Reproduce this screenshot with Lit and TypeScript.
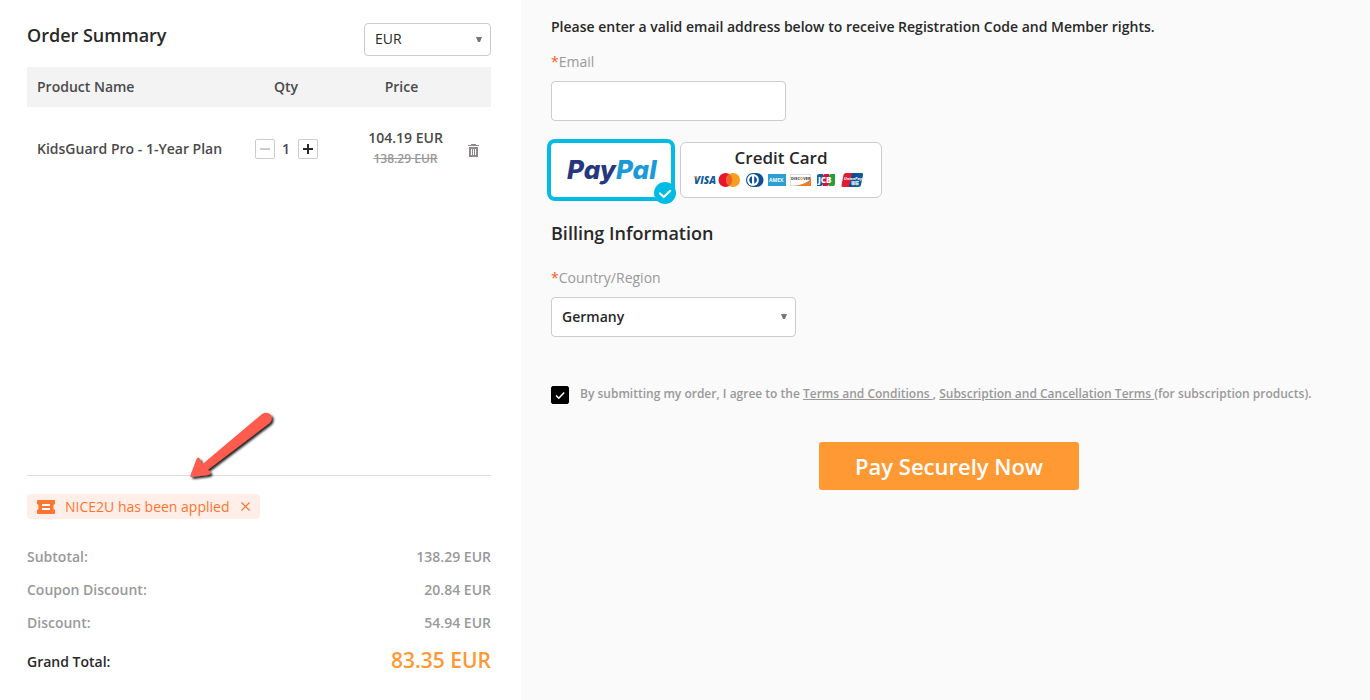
import { LitElement, html, css } from "lit";
import { customElement, state } from "lit/decorators.js";

@customElement("payment-methods")
class PaymentMethods extends LitElement {
  static styles = css`
    :host { display: block; }
    .methods { display: flex; align-items: center; gap: 5px; margin-left: -4px; }
    button { box-sizing: border-box; padding: 0; background: #fff; cursor: pointer; font-family: "Open Sans", sans-serif; }
    .paypal { position: relative; width: 128px; height: 62px; border: 4px solid #00bce4; border-radius: 8px; }
    .paypal svg { display: block; }
    .paypal .tick { position: absolute; right: -5px; bottom: -7px; }
    .card { width: 202px; height: 56px; border: 1px solid #ccc; border-radius: 6px; display: flex; flex-direction: column; align-items: center; }
    .card-title { font-size: 17px; line-height: 24px; font-weight: 600; color: #282828; margin-top: 3px; }
    .logos { display: block; margin-top: 2px; }
    .pp { font: italic 800 26px Inter, sans-serif; font-feature-settings: "cv11"; }
    .visa { font: italic 800 10px "Open Sans", sans-serif; }
    .tiny { font: 700 5px "Open Sans", sans-serif; }
    .jcb { font: 800 8px "Open Sans", sans-serif; }
  `;

  render() {
    return html`<div class="methods">
      <button class="paypal" type="button" aria-label="PayPal" aria-pressed="true">
        <svg width="120" height="54" viewBox="0 0 120 54">
          <text class="pp" x="16" y="36"><tspan fill="#26377f">Pay</tspan><tspan fill="#1a9ad8">Pal</tspan></text>
        </svg>
        <svg class="tick" width="22" height="22" viewBox="0 0 22 22">
          <circle cx="11" cy="11" r="11" fill="#00bce4" />
          <path d="M6 11.5 9.8 15 16.2 8.8" fill="none" stroke="#fff" stroke-width="2.2" stroke-linecap="round" stroke-linejoin="round" />
        </svg>
      </button>
      <button class="card" type="button" aria-pressed="false">
        <span class="card-title">Credit Card</span>
        <svg class="logos" width="174" height="16" viewBox="0 0 174 16" role="img" aria-label="Accepted cards">
          <text class="visa" x="0" y="12" fill="#125b9f">VISA</text>
          <path d="M0 4h2.600l1.400 3.500Q2.500 5 0 4.500Z" fill="#f2a022" />
          <circle cx="31.500" cy="8" r="7" fill="#e8152f" />
          <circle cx="39" cy="8" r="7" fill="#f79e1f" />
          <path d="M35.2 2.2a7 7 0 0 1 0 11.600 7 7 0 0 1 0-11.600Z" fill="#f4602a" />
          <path d="M59 1h3.500a7 7 0 0 1 0 14H59A7 7 0 0 1 59 1Z" fill="#0c5093" />
          <circle cx="59" cy="8" r="5.900" fill="#fff" />
          <path d="M58 4.200v7.600a4 4 0 0 1 0-7.600ZM60.200 4.200v7.600a4 4 0 0 0 0-7.600Z" fill="#0c5093" />
          <rect x="74" y="2" width="18" height="12" fill="#2a9fd6" />
          <text class="tiny" x="75" y="10" fill="#fff">AMEX</text>
          <rect x="96.500" y="2.500" width="20" height="11" fill="#fff" stroke="#ddd" />
          <path d="M117 7v7h-16Q112 12 117 7Z" fill="#ee7c26" />
          <text x="97" y="8" fill="#333" font-family="Open Sans" font-weight="700" font-size="4">DISC<tspan fill="#ee7c26">O</tspan>VER</text>
          <path d="M125 2h4v10q0 2-2 2h-4V4q0-2 2-2Z" fill="#1260a8" />
          <path d="M131 2h4v10q0 2-2 2h-4V4q0-2 2-2Z" fill="#d6123b" />
          <path d="M137 2h4v10q0 2-2 2h-4V4q0-2 2-2Z" fill="#279d3b" />
          <text class="jcb" x="124" y="11" fill="#fff">JCB</text>
          <path d="M152 1h7l-3 14h-7q-2 0-1.500-2l2-10q.5-2 2.500-2Z" fill="#df1c34" />
          <path d="M158 1h6l-3 14h-6Z" fill="#0c4c8c" />
          <path d="M163 1h5q1.500 0 1 2l-2 10q-.5 2-2.500 2H160Z" fill="#0b5a94" />
          <text x="150" y="8" fill="#fff" font-family="Open Sans" font-style="italic" font-weight="700" font-size="4">UnionPay</text>
          <text x="157" y="13" fill="#fff" font-family="Noto Sans CJK SC" font-weight="700" font-size="4">银联</text>
        </svg>
      </button>
    </div>`;
  }
}

@customElement("app-root")
class AppRoot extends LitElement {
  static styles = css`
    :host { display: block; font: 600 14px/20px "Open Sans", sans-serif; color: #282828; }
    * { box-sizing: border-box; }
    h1, h2, p, dl, dd, dt { margin: 0; font-weight: inherit; }
    button { font: inherit; cursor: pointer; padding: 0; }
    .page { display: grid; grid-template-columns: 521fr 849fr; min-height: 100vh; }

    .summary { background: #fff; padding: 23px 30px 15px 27px; display: flex; flex-direction: column; }
    .top { display: flex; justify-content: space-between; margin-bottom: 11px; }
    .title { font-size: 18px; line-height: 24px; }

    .select { position: relative; display: block; }
    .select select { appearance: none; display: block; width: 100%; font: inherit; color: inherit; background: #fff; border: 1px solid #ccc; border-radius: 4px; padding: 0 10px; }
    .select svg { position: absolute; right: 9px; top: 50%; margin-top: -3px; pointer-events: none; }
    .currency { width: 127px; }
    .currency select { height: 33px; font-weight: 400; padding-bottom: 2px; }
    .country { width: 245px; }
    .country select { height: 40px; }

    table { width: 100%; border-collapse: collapse; table-layout: fixed; color: #4a4a4a; }
    th, td { padding: 0; font-weight: inherit; text-align: center; }
    th { height: 40px; background: #f3f3f3; }
    .name { text-align: left; padding-left: 10px; }
    .col-qty { width: 122px; }
    .col-price { width: 109px; }
    .col-del { width: 35px; }
    td { padding-top: 22px; }
    .qty { display: flex; justify-content: center; align-items: center; }
    .qty output { width: 23px; }
    .step { width: 20px; height: 20px; border: 1px solid #ccc; border-radius: 2px; background: #fff; color: #282828; }
    .step:disabled { color: #ccc; cursor: default; }
    .step svg, .trash svg, .close svg { display: block; margin: auto; }
    .price { padding: 20px 0 0 8px; line-height: 22px; }
    .old { display: block; font-size: 12px; line-height: 20px; color: #999; }
    .trash, .close { border: 0; background: none; display: block; }
    .trash { color: #8f898b; margin: 3px auto 0; }

    .totals { position: relative; margin-top: auto; border-top: 1px solid #ddd; padding-top: 18px; }
    .arrow { position: absolute; left: 156px; bottom: 100%; margin-bottom: -10px; pointer-events: none; }
    .coupon { display: flex; align-items: center; width: fit-content; height: 25px; padding: 0 10px; border-radius: 4px; background: #ffefe8; color: #ff7431; font-weight: 400; margin-bottom: 21px; }
    .coupon-text { margin: 0 11px 0 10px; }
    .close { color: inherit; }
    .line { display: flex; justify-content: space-between; line-height: 33px; color: #999; }
    .grand { line-height: 46px; color: #282828; }
    .amount { font-size: 21px; line-height: 42px; color: #ff9933; }

    .checkout { background: #fafafa; padding: 17px 23px 30px 30px; }
    .label { display: block; font-weight: 400; color: #999; }
    .req { color: #ff5722; }
    .email { display: block; width: 235px; height: 40px; margin: 9px 0 18px; border: 1px solid #ccc; border-radius: 4px; background: #fff; font: inherit; padding: 0 10px; }
    .intro { margin-bottom: 15px; }
    .billing { font-size: 18px; line-height: 24px; margin: 20px 0 23px; }
    .country { margin: 9px 0 49px; }
    .agree { display: flex; gap: 11px; font-size: 12px; line-height: 16px; color: #999; }
    .agree a { color: inherit; }
    .box { position: relative; width: 18px; height: 18px; }
    .box input { appearance: none; display: block; margin: 0; width: 18px; height: 18px; background: #fff; border: 1px solid #000; border-radius: 2px; }
    .box input:checked { background: #000; }
    .box svg { position: absolute; left: 0; top: 0; pointer-events: none; }
    .pay { display: block; width: 260px; height: 48px; margin: 38px auto 0; border: 0; border-radius: 3px; background: #ff9933; color: #fff; font-size: 22px; }
  `;

  @state() qty = 1;

  caret() {
    return html`<svg width="6" height="5" viewBox="0 0 6 5" aria-hidden="true"><path d="M0 0H6L4 5H2Z" fill="#777" /></svg>`;
  }

  line(label: string, value: string) {
    return html`<div class="line"><dt>${label}</dt><dd>${value}</dd></div>`;
  }

  render() {
    return html`<main class="page">
      <section class="summary">
        <div class="top">
          <h1 class="title">Order Summary</h1>
          <label class="select currency"><select aria-label="Currency"><option>EUR</option><option>USD</option></select>${this.caret()}</label>
        </div>
        <table>
          <colgroup><col /><col class="col-qty" /><col class="col-price" /><col class="col-del" /></colgroup>
          <thead><tr><th class="name">Product Name</th><th>Qty</th><th>Price</th><th></th></tr></thead>
          <tbody><tr>
            <td class="name">KidsGuard Pro - 1-Year Plan</td>
            <td><div class="qty">
              <button class="step" aria-label="Decrease quantity" ?disabled=${this.qty <= 1} @click=${() => this.qty--}>
                <svg width="10" height="10"><path d="M0 5H10" stroke="currentColor" stroke-width="2" /></svg>
              </button>
              <output>${this.qty}</output>
              <button class="step" aria-label="Increase quantity" @click=${() => this.qty++}>
                <svg width="10" height="10"><path d="M0 5H10M5 0V10" stroke="currentColor" stroke-width="2" /></svg>
              </button>
            </div></td>
            <td class="price">104.19 EUR<del class="old">138.29 EUR</del></td>
            <td><button class="trash" aria-label="Remove product">
              <svg width="11" height="13" viewBox="0 0 11 13" fill="currentColor"><path d="M3 0H8V1H11V2H0V1H3ZM1 3H10V13H1ZM3 5V11H4V5ZM5 5V11H6V5ZM7 5V11H8V5Z" fill-rule="evenodd" /></svg>
            </button></td>
          </tr></tbody>
        </table>

        <div class="totals">
          <svg class="arrow" width="96" height="76" viewBox="0 0 96 76" aria-hidden="true">
            <defs><filter id="shade" x="-20%" y="-20%" width="140%" height="140%"><feDropShadow dx="2" dy="2" stdDeviation="1.200" flood-color="#000" flood-opacity=".85" /></filter></defs>
            <path filter="url(#shade)" fill="#ff5b4d" d="M7.500 65 13.500 49Q15 46 17 49L19 54.500 79 4Q84 1 88 5Q90 9 86.500 13L24.500 60 26.500 61Q29 64 25 65L9 67Q6.500 67 7.500 65Z" />
          </svg>
          <div class="coupon">
            <svg width="18" height="14" viewBox="0 0 18 14" aria-hidden="true">
              <path fill="currentColor" d="M1 0H17Q18 0 18 1V4L16.500 5V9L18 10V13Q18 14 17 14H1Q0 14 0 13V10L1.500 9V5L0 4V1Q0 0 1 0Z" />
              <path d="M5 5H13M5 9H13" stroke="#fff" stroke-width="2" />
            </svg>
            <span class="coupon-text">NICE2U has been applied</span>
            <button class="close" aria-label="Remove coupon"><svg width="9" height="9"><path d="M.5.5 8.500 8.500M8.500.5.5 8.500" stroke="currentColor" stroke-width="1.200" /></svg></button>
          </div>
          <dl>
            ${this.line("Subtotal:", "138.29 EUR")}
            ${this.line("Coupon Discount:", "20.84 EUR")}
            ${this.line("Discount:", "54.94 EUR")}
            <div class="line grand"><dt>Grand Total:</dt><dd class="amount">83.35 EUR</dd></div>
          </dl>
        </div>
      </section>

      <section class="checkout">
        <p class="intro">Please enter a valid email address below to receive Registration Code and Member rights.</p>
        <label class="label" for="email"><span class="req">*</span>Email</label>
        <input class="email" id="email" type="email" />
        <payment-methods></payment-methods>
        <h2 class="billing">Billing Information</h2>
        <label class="label" for="country"><span class="req">*</span>Country/Region</label>
        <div class="select country"><select id="country"><option>Germany</option><option>France</option></select>${this.caret()}</div>
        <div class="agree">
          <span class="box"><input type="checkbox" id="agree" checked /><svg width="18" height="18"><path d="M5 9.500 7.800 12.200 13.200 6.500" fill="none" stroke="#fff" stroke-width="1.500" /></svg></span>
          <label for="agree">By submitting my order, I agree to the <a href="#terms">Terms and Conditions </a>, <a href="#subscription">Subscription and Cancellation Terms </a>(for subscription products).</label>
        </div>
        <button class="pay" type="button">Pay Securely Now</button>
      </section>
    </main>`;
  }
}
